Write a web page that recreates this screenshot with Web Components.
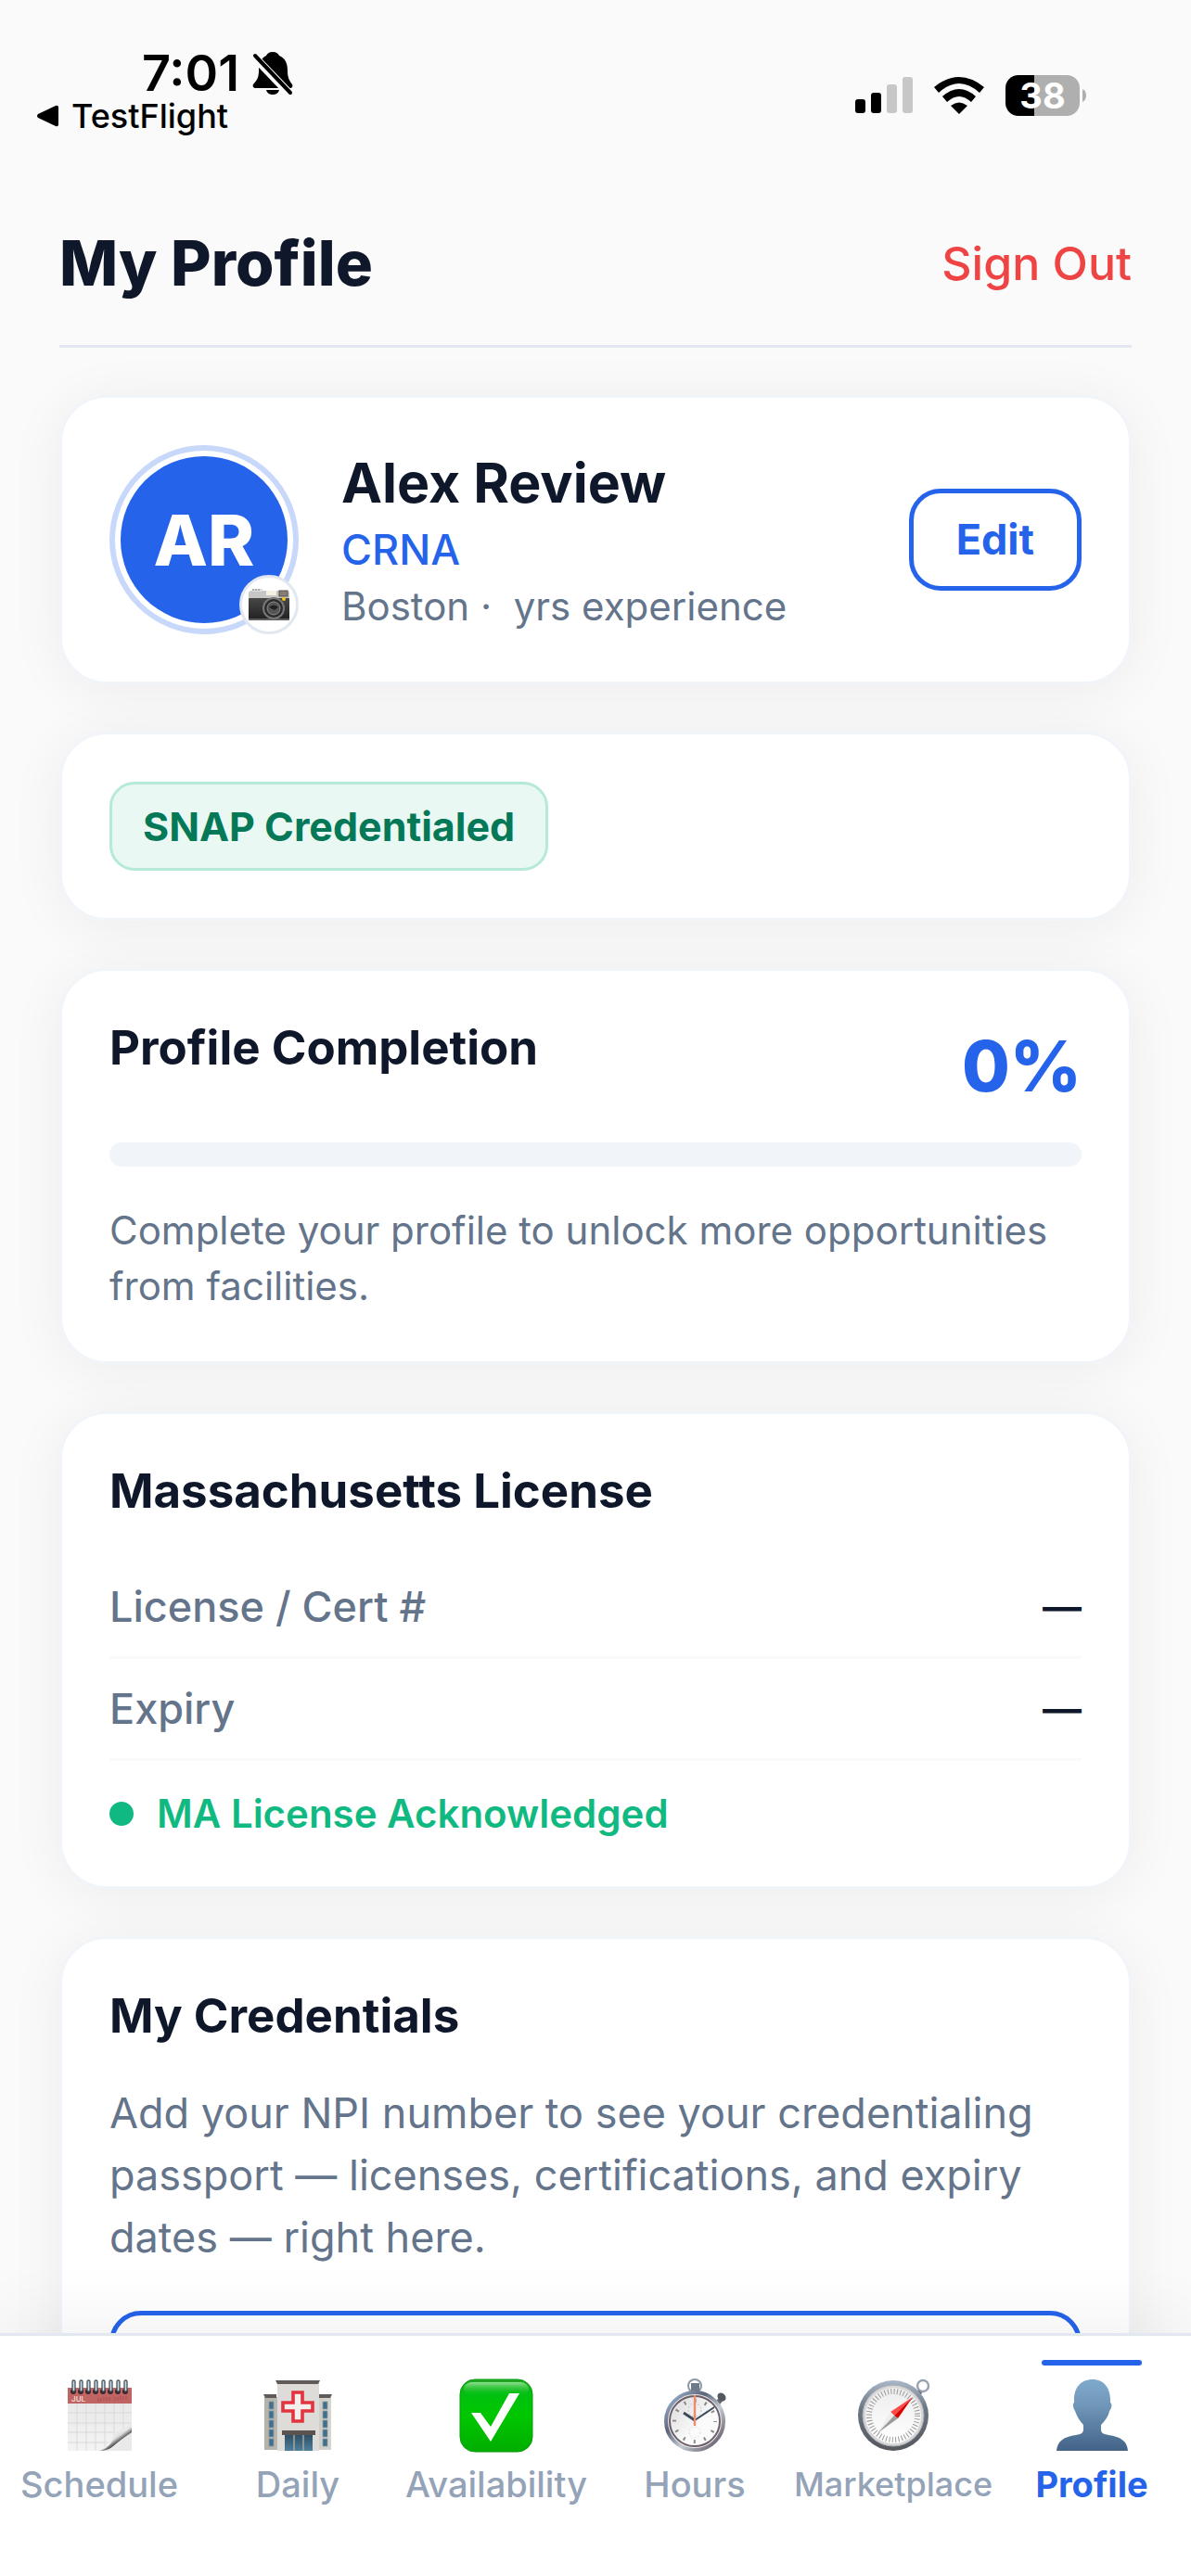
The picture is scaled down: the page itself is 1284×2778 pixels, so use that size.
<!DOCTYPE html>
<html lang="en">
<head>
<meta charset="UTF-8">
<meta name="viewport" content="width=device-width, initial-scale=1">
<title>My Profile</title>
<style>
    :root {
        --blue: #2563eb;
        --ink: #0f172a;
        --muted: #64748b;
        --line: #e2e8f0;
        --soft: #f1f5f9;
    }

    body {
        margin: 0;
        background: #fafafa;
        color: var(--ink);
        font-family: Inter, "Liberation Sans", sans-serif;
    }
</style>
</head>
<body>
<profile-screen></profile-screen>

<script>
const reset = `
    * { margin: 0; padding: 0; box-sizing: border-box; }
    :host { display: block; }
    button { font: inherit; background: none; border: none; cursor: pointer; }
    svg { display: block; }
`;

class BaseElement extends HTMLElement {
    connectedCallback() {
        if (this.shadowRoot) return;
        this.attachShadow({ mode: 'open' });
        this.shadowRoot.innerHTML = `<style>${reset}</style>${this.template()}`;
    }
}

class StatusBar extends BaseElement {
    template() {
        return `
            <style>
                .bar {
                    display: flex;
                    justify-content: space-between;
                    align-items: flex-end;
                    padding: 49px 113px 53px 40px;
                    color: #000;
                }
                .time {
                    display: flex;
                    align-items: center;
                    gap: 14px;
                    padding-left: 113px;
                    font-size: 54px;
                    line-height: 60px;
                    font-weight: 600;
                }
                .back {
                    display: flex;
                    align-items: center;
                    gap: 14px;
                    font-size: 36px;
                    line-height: 32px;
                    font-weight: 500;
                    color: inherit;
                }
                .signals {
                    display: flex;
                    align-items: center;
                    gap: 23px;
                    padding-bottom: 16px;
                }
                .battery { display: flex; align-items: center; gap: 3px; }
                .cell {
                    width: 80px;
                    border-radius: 14px;
                    background: linear-gradient(90deg, #000 39%, #afafaf 39%);
                    color: #fff;
                    font-size: 38px;
                    line-height: 44px;
                    font-weight: 700;
                    text-align: center;
                }
            </style>
            <div class="bar">
                <div>
                    <div class="time">
                        <span>7:01</span>
                        <svg width="44" height="48" viewBox="0 0 44 48" aria-hidden="true">
                            <path d="M22 1c4 0 6 2 7 4 7 3 9 9 9 16 0 8 2 11 5 15 1 2 0 4-2 4H4c-3 0-4-2-3-4 4-5 6-7 6-15C7 13 9 8 15 5c1-2 3-4 7-4z"/>
                            <path d="M15 42h14c-1 4-4 5-7 5s-6-1-7-5z"/>
                            <path d="M0 4l42 44" stroke="#fafafa" stroke-width="9"/>
                            <path d="M3 5l38 40" stroke="#000" stroke-width="4" stroke-linecap="round"/>
                        </svg>
                    </div>
                    <button class="back">
                        <svg width="23" height="24" viewBox="0 0 23 24" aria-hidden="true"><path d="M1 10L20 1q3-1 3 2v18q0 3-3 2L1 14q-2-2 0-4z"/></svg>
                        TestFlight
                    </button>
                </div>
                <div class="signals">
                    <svg width="62" height="40" viewBox="0 0 62 40" aria-label="Signal">
                        <rect y="24" width="11" height="15" rx="3"/>
                        <rect x="17" y="17" width="11" height="22" rx="3"/>
                        <rect x="34" y="8" width="11" height="31" rx="3" fill="#c7c7c7"/>
                        <rect x="51" width="11" height="39" rx="3" fill="#c7c7c7"/>
                    </svg>
                    <svg width="54" height="40" viewBox="0 0 54 40" aria-label="Wi-Fi">
                        <path d="M0 11Q27-11 54 11L49 17Q27-3 5 17Z"/>
                        <path d="M9 21Q27 5 45 21L40 27Q27 15 14 27Z"/>
                        <path d="M18 31Q27 24 36 31L27 40Z"/>
                    </svg>
                    <div class="battery">
                        <div class="cell">38</div>
                        <svg width="4" height="14" viewBox="0 0 4 14" aria-hidden="true"><path d="M0 0q4 2 4 7t-4 7z" fill="#afafaf"/></svg>
                    </div>
                </div>
            </div>
        `;
    }
}

class PageHeader extends BaseElement {
    template() {
        return `
            <style>
                header {
                    display: flex;
                    justify-content: space-between;
                    align-items: center;
                    margin: 0 64px;
                    padding: 48px 0 46px;
                    border-bottom: 3px solid var(--line);
                }
                h1 { font-size: 67px; line-height: 84px; font-weight: 800; }
                button { color: #ef4444; font-size: 50px; line-height: 60px; font-weight: 500; }
            </style>
            <header>
                <h1><slot></slot></h1>
                <button>Sign Out</button>
            </header>
        `;
    }
}

class SurfaceCard extends BaseElement {
    template() {
        return `
            <style>
                section {
                    padding: 51px;
                    background: #fff;
                    border: 3px solid var(--soft);
                    border-radius: 51px;
                    box-shadow: 0 6px 60px rgba(0, 0, 0, 0.06);
                }
            </style>
            <section><slot></slot></section>
        `;
    }
}

class CardTitle extends BaseElement {
    template() {
        return `
            <style>
                h2 { font-size: 51px; line-height: 64px; font-weight: 700; }
            </style>
            <h2><slot></slot></h2>
        `;
    }
}

class UserAvatar extends BaseElement {
    template() {
        return `
            <style>
                :host { position: relative; flex: none; }
                .ring {
                    padding: 6px;
                    border: 6px solid #c8d8fb;
                    border-radius: 50%;
                }
                .initials {
                    width: 180px;
                    border-radius: 50%;
                    background: var(--blue);
                    color: #fff;
                    font-size: 76px;
                    line-height: 180px;
                    font-weight: 800;
                    text-align: center;
                }
                button {
                    position: absolute;
                    right: 0;
                    bottom: 0;
                    display: grid;
                    place-items: center;
                    width: 64px;
                    height: 64px;
                    background: #fff;
                    border: 3px solid var(--line);
                    border-radius: 50%;
                }
            </style>
            <div class="ring"><div class="initials"><slot></slot></div></div>
            <button aria-label="Change photo">
                <svg width="46" height="36" viewBox="0 0 46 36">
                    <defs>
                        <linearGradient id="body" x2="0" y2="1"><stop stop-color="#484848"/><stop offset="1" stop-color="#202020"/></linearGradient>
                    </defs>
                    <path d="M1 6q0-3 3-3h1V1h11v2h27q2 0 2 3v6H1z" fill="#c6c6c4"/>
                    <path d="M5 1h11v3H5z" fill="#dedede"/>
                    <path d="M6 1v2M9 1v2M12 1v2" stroke="#777"/>
                    <rect x="20" y="3" width="11" height="5" fill="#f4f0e2"/>
                    <rect x="34" y="3" width="9" height="6" fill="#8a7d74" stroke="#555"/>
                    <rect x="1" y="11" width="44" height="24" rx="1" fill="url(#body)"/>
                    <path d="M1 34h44" stroke="#999"/>
                    <circle cx="28" cy="22" r="12" fill="#777"/>
                    <circle cx="28" cy="22" r="10" fill="#2b2b2b"/>
                    <circle cx="28" cy="22" r="7" fill="#555" stroke="#8c8c8c"/>
                    <path d="M23 21q5-5 10 0l-4 3z" fill="#222"/>
                    <circle cx="39" cy="12" r="2" fill="#f5c518"/>
                </svg>
            </button>
        `;
    }
}

class ProfileSummary extends BaseElement {
    template() {
        return `
            <style>
                .summary { display: flex; align-items: center; gap: 46px; }
                .info { flex: 1; }
                .name { font-size: 59px; line-height: 76px; font-weight: 700; }
                .role { font-size: 45px; line-height: 68px; font-weight: 500; color: var(--blue); }
                .meta { font-size: 42px; line-height: 54px; color: var(--muted); white-space: pre; }
            </style>
            <div class="summary">
                <user-avatar>AR</user-avatar>
                <div class="info">
                    <h2 class="name">Alex Review</h2>
                    <p class="role">CRNA</p>
                    <p class="meta">Boston ·  yrs experience</p>
                </div>
                <outline-button>Edit</outline-button>
            </div>
        `;
    }
}

class OutlineButton extends BaseElement {
    template() {
        return `
            <style>
                button {
                    width: 100%;
                    min-height: 110px;
                    padding: 0 46px;
                    border: 5px solid var(--blue);
                    border-radius: 34px;
                    color: var(--blue);
                    font-size: 45px;
                    line-height: 54px;
                    font-weight: 700;
                }
            </style>
            <button aria-label="${this.getAttribute('label') || this.textContent}"><slot></slot></button>
        `;
    }
}

class StatusChip extends BaseElement {
    template() {
        return `
            <style>
                .chip {
                    display: inline-block;
                    vertical-align: top;
                    padding: 18px 33px;
                    border: 3px solid #b5ead7;
                    border-radius: 27px;
                    background: #eaf8f4;
                    color: #047857;
                    font-size: 43px;
                    line-height: 54px;
                    font-weight: 700;
                }
            </style>
            <span class="chip"><slot></slot></span>
        `;
    }
}

class CompletionMeter extends BaseElement {
    template() {
        const value = this.getAttribute('value');
        return `
            <style>
                .top { display: flex; justify-content: space-between; }
                .value { font-size: 75px; line-height: 104px; font-weight: 800; color: var(--blue); }
                .track {
                    height: 26px;
                    margin: 30px 0 39px;
                    border-radius: 13px;
                    background: var(--soft);
                    overflow: hidden;
                }
                .fill { width: ${value}%; height: 100%; background: var(--blue); }
                p { font-size: 42px; line-height: 60px; color: var(--muted); }
            </style>
            <div class="top">
                <card-title>Profile Completion</card-title>
                <div class="value">${value}%</div>
            </div>
            <div class="track" role="progressbar" aria-label="Profile Completion" aria-valuenow="${value}">
                <div class="fill"></div>
            </div>
            <p><slot></slot></p>
        `;
    }
}

class DetailRow extends BaseElement {
    template() {
        return `
            <style>
                dl {
                    display: flex;
                    justify-content: space-between;
                    align-items: center;
                    padding: 24px 0 23px;
                    border-bottom: 3px solid #f8fafc;
                    font-size: 45px;
                    line-height: 60px;
                    font-weight: 500;
                }
                dt { color: var(--muted); }
                dd { font-size: 42px; font-weight: 600; }
            </style>
            <dl><dt>${this.getAttribute('label')}</dt><dd><slot></slot></dd></dl>
        `;
    }
}

class LicenseDetails extends BaseElement {
    template() {
        return `
            <style>
                card-title { margin-bottom: 39px; }
                .state {
                    display: flex;
                    align-items: center;
                    gap: 25px;
                    padding-top: 30px;
                    color: #10b981;
                    font-size: 42px;
                    line-height: 54px;
                    font-weight: 600;
                }
                .dot { width: 26px; height: 26px; border-radius: 50%; background: #10b981; }
            </style>
            <card-title>Massachusetts License</card-title>
            <detail-row label="License / Cert #">—</detail-row>
            <detail-row label="Expiry">—</detail-row>
            <p class="state"><span class="dot"></span>MA License Acknowledged</p>
        `;
    }
}

class CredentialPrompt extends BaseElement {
    template() {
        return `
            <style>
                p {
                    margin: 39px 0 46px;
                    font-size: 45px;
                    line-height: 67px;
                    color: var(--muted);
                }
            </style>
            <card-title>My Credentials</card-title>
            <p><slot></slot></p>
            <outline-button label="Add NPI number"></outline-button>
        `;
    }
}

const tabIcons = {
    calendar: `
        <defs>
            <linearGradient id="page" x2="0" y2="1"><stop stop-color="#e8e8e8"/><stop offset="1" stop-color="#f4f4f4"/></linearGradient>
            <linearGradient id="curl" x1=".3" y1=".3" x2=".75" y2=".8"><stop stop-color="#fff"/><stop offset=".45" stop-color="#ddd"/><stop offset=".7" stop-color="#4d4d4d"/><stop offset="1" stop-color="#ddd"/></linearGradient>
        </defs>
        <path d="M6 26h69v52H6z" fill="url(#page)"/>
        <path d="M16 27v51M26 27v51M36 27v51M46 27v47M56 27v35M66 27v28M6 37h69M6 48h69M6 58h50M6 69h44" stroke="#d9d9d9" fill="none"/>
        <path d="M75 46q-2 7-12 9-7 2-9 10-3 8-14 13h35z" fill="#e9e9e9"/>
        <path d="M75 50q-3 6-13 8-6 5-9 11-4 7-14 9 11 0 16-5 8-7 20-15z" fill="url(#curl)"/>
        <path d="M6 10h69v17H6z" fill="#c06464"/>
        <path d="M39 21v4M42 21v4M45 20v4M48 20v4M51 20v4M57 20v4M60 20v4M63 19v4M66 19v4M69 19v4" stroke="#a94f52"/>
        <text x="10" y="25" font-size="8" font-weight="600" fill="#f3dada">JUL</text>
        <g fill="#3a2a2d"><circle cx="12" cy="14" r="3"/><circle cx="20" cy="14" r="3"/><circle cx="28" cy="14" r="3"/><circle cx="36" cy="14" r="3"/><circle cx="44" cy="14" r="3"/><circle cx="52" cy="14" r="3"/><circle cx="60" cy="14" r="3"/><circle cx="68" cy="14" r="3"/></g>
        <g fill="#c9dbe3" stroke="#46525b" stroke-width="1.3"><rect x="11" y="2" width="3" height="12" rx="1.5"/><rect x="19" y="2" width="3" height="12" rx="1.5"/><rect x="27" y="2" width="3" height="12" rx="1.5"/><rect x="35" y="2" width="3" height="12" rx="1.5"/><rect x="43" y="2" width="3" height="12" rx="1.5"/><rect x="51" y="2" width="3" height="12" rx="1.5"/><rect x="59" y="2" width="3" height="12" rx="1.5"/><rect x="67" y="2" width="3" height="12" rx="1.5"/></g>
    `,
    hospital: `
        <defs>
            <linearGradient id="wall" x2="1" y2="0"><stop stop-color="#b3b1aa"/><stop offset="1" stop-color="#d5d4cf"/></linearGradient>
            <linearGradient id="glass" x2="0" y2="1"><stop stop-color="#2d4d63"/><stop offset="1" stop-color="#4d7f9c"/></linearGradient>
        </defs>
        <path d="M4 20h14v57H4zM63 20h13v57H63z" fill="url(#wall)"/>
        <path d="M3 17h14v4H5zM63 17h14l-2 4H63z" fill="#605a59"/>
        <path d="M18 5h45v73H18z" fill="#dddcd8"/>
        <path d="M16 2h48l-2 4H18z" fill="#605a59"/>
        <path d="M35 15h10v11h11v9H45v11H35V35H24v-9h11z" fill="#f2efec" stroke="#e2343f" stroke-width="3.6"/>
        <g fill="#3f6f8c" stroke="#8d9ba0" stroke-width=".8"><rect x="9" y="25" width="5" height="8"/><rect x="9" y="35" width="5" height="8"/><rect x="9" y="45" width="5" height="8"/><rect x="9" y="55" width="5" height="8"/><rect x="9" y="65" width="5" height="8"/><rect x="67" y="25" width="5" height="8"/><rect x="67" y="35" width="5" height="8"/><rect x="67" y="45" width="5" height="8"/><rect x="67" y="55" width="5" height="8"/><rect x="67" y="65" width="5" height="8"/></g>
        <path d="M26 60h30v18H26z" fill="url(#glass)"/>
        <path d="M36 61v17M46 61v17" stroke="#aaa49b" stroke-width="1.5"/>
        <path d="M23 56h36v5H23z" fill="#5b5350"/>
    `,
    check: `
        <defs>
            <linearGradient id="green" x2="0" y2="1"><stop stop-color="#26a426"/><stop offset=".2" stop-color="#00c010"/><stop offset=".5" stop-color="#00c700"/><stop offset="1" stop-color="#00ad00"/></linearGradient>
            <linearGradient id="gloss" x2="0" y2="1"><stop stop-color="#8fe08f"/><stop offset="1" stop-color="#00c010" stop-opacity="0"/></linearGradient>
        </defs>
        <rect x="1" y="1" width="78" height="78" rx="16" fill="url(#green)" stroke="#0a9a0a"/>
        <rect x="5" y="4" width="70" height="15" rx="9" fill="url(#gloss)"/>
        <path d="M13 37h10l11 15 20-36h11L34 68z" fill="#fff"/>
    `,
    stopwatch: `
        <defs>
            <linearGradient id="rim" x1="0" y1="0" x2="1" y2="1"><stop stop-color="#a9c0e0"/><stop offset=".35" stop-color="#5b6478"/><stop offset=".6" stop-color="#c5ccd5"/><stop offset="1" stop-color="#4a3f4c"/></linearGradient>
            <linearGradient id="dial" x2="1" y2="1"><stop stop-color="#d9d9d9"/><stop offset=".6" stop-color="#fbfbfb"/></linearGradient>
        </defs>
        <circle cx="40" cy="8" r="7" fill="none" stroke="#8d98a5" stroke-width="2"/>
        <path d="M36 5h9v11h-9z" fill="#6d7b88"/>
        <path d="M63 24l6-6 3 4-5 6z" fill="#65696f"/>
        <ellipse cx="69" cy="20" rx="4" ry="5" transform="rotate(-45 69 20)" fill="#525960"/>
        <circle cx="40" cy="46" r="31" fill="#e9eaec" stroke="url(#rim)" stroke-width="4"/>
        <circle cx="40" cy="46" r="27" fill="url(#dial)" stroke="#6c5e66" stroke-width="2"/>
        <circle cx="40" cy="46" r="22" fill="none" stroke="#8a8a8a" stroke-width="4" stroke-dasharray="2 9.52" stroke-dashoffset="1"/>
        <circle cx="40" cy="34" r="7" fill="none" stroke="#c4c4c4" stroke-dasharray="2 2"/>
        <circle cx="40" cy="58" r="6" fill="none" stroke="#ddd" stroke-dasharray="2 2"/>
        <path d="M40 45l21-14" stroke="#3b4a5a" stroke-width="2"/>
        <path d="M40 45l-12-8" stroke="#3b4a5a" stroke-width="3"/>
        <path d="M40 18v33" stroke="#f08a6c" stroke-width="2.4"/>
    `,
    compass: `
        <defs>
            <linearGradient id="case" x2="0" y2="1"><stop stop-color="#a9b8c9"/><stop offset=".4" stop-color="#6b7684"/><stop offset="1" stop-color="#55585d"/></linearGradient>
            <linearGradient id="face" x2="0" y2="1"><stop stop-color="#ededed"/><stop offset="1" stop-color="#fff"/></linearGradient>
        </defs>
        <circle cx="72" cy="8" r="6" fill="none" stroke="#98a2ae" stroke-width="2.4"/>
        <path d="M66 14l4 3" stroke="#66707c" stroke-width="4"/>
        <circle cx="40" cy="40" r="38" fill="url(#case)"/>
        <circle cx="40" cy="40" r="33" fill="#d6d6d6" stroke="#a9adb2"/>
        <circle cx="40" cy="40" r="30" fill="url(#face)"/>
        <circle cx="40" cy="40" r="26" fill="none" stroke="#9a9a9a" stroke-width="6" stroke-dasharray="1 2.4"/>
        <path d="M61 20L37 36l4 4z" fill="#ff4a4a"/>
        <path d="M61 20L45 43l-4-3z" fill="#d90000"/>
        <path d="M23 59l14-23 4 4z" fill="#eee"/>
        <path d="M23 59l22-16-4-3z" fill="#9c9c9c"/>
    `,
    person: `
        <defs>
            <linearGradient id="bust" x2="0" y2="1"><stop stop-color="#7fa9cb"/><stop offset=".3" stop-color="#749bbd"/><stop offset="1" stop-color="#436387"/></linearGradient>
        </defs>
        <path d="M41 1C28 1 21 10 21 23v3c-2 1-1 6 1 9 2 6 5 11 9 15v5c0 4-3 5-8 6C10 63 3 67 2 78h77C78 67 71 63 58 61c-5-1-8-2-8-6v-5c4-4 8-9 9-15 3-3 3-8 1-9v-3C60 10 53 1 41 1z" fill="url(#bust)"/>
    `
};

class TabItem extends BaseElement {
    template() {
        return `
            <style>
                a {
                    display: flex;
                    flex-direction: column;
                    align-items: center;
                    padding: 26px 0 77px;
                    color: #94a3b8;
                    font-size: 38px;
                    line-height: 44px;
                    font-weight: 500;
                    text-decoration: none;
                }
                .mark { width: 108px; height: 6px; margin-bottom: 14px; border-radius: 3px; }
                svg { margin-bottom: 12px; }
                :host([compact]) a { font-size: 36px; }
                :host([active]) a { color: var(--blue); font-weight: 700; }
                :host([active]) .mark { background: var(--blue); }
            </style>
            <a href="#">
                <span class="mark"></span>
                <svg width="80" height="80" viewBox="0 0 80 80" aria-hidden="true">${tabIcons[this.getAttribute('icon')]}</svg>
                <span><slot></slot></span>
            </a>
        `;
    }
}

class TabBar extends BaseElement {
    template() {
        return `
            <style>
                nav {
                    display: grid;
                    grid-template-columns: repeat(6, minmax(0, 1fr));
                    background: #fff;
                    border-top: 3px solid var(--line);
                    box-shadow: 0 -12px 72px rgba(0, 0, 0, 0.06);
                }
            </style>
            <nav>
                <tab-item icon="calendar">Schedule</tab-item>
                <tab-item icon="hospital">Daily</tab-item>
                <tab-item icon="check">Availability</tab-item>
                <tab-item icon="stopwatch">Hours</tab-item>
                <tab-item icon="compass" compact>Marketplace</tab-item>
                <tab-item icon="person" active>Profile</tab-item>
            </nav>
        `;
    }
}

class ProfileScreen extends BaseElement {
    template() {
        return `
            <style>
                :host {
                    display: flex;
                    flex-direction: column;
                    height: 100vh;
                }
                main {
                    flex: 1;
                    min-height: 0;
                    overflow-y: auto;
                    scrollbar-width: none;
                }
                .cards {
                    display: flex;
                    flex-direction: column;
                    gap: 51px;
                    padding: 51px 64px;
                }
                tab-bar { position: relative; z-index: 1; }
            </style>
            <status-bar></status-bar>
            <page-header>My Profile</page-header>
            <main>
                <div class="cards">
                    <surface-card><profile-summary></profile-summary></surface-card>
                    <surface-card><status-chip>SNAP Credentialed</status-chip></surface-card>
                    <surface-card>
                        <completion-meter value="0">Complete your profile to unlock more opportunities from facilities.</completion-meter>
                    </surface-card>
                    <surface-card><license-details></license-details></surface-card>
                    <surface-card>
                        <credential-prompt>Add your NPI number to see your credentialing passport — licenses, certifications, and expiry dates — right here.</credential-prompt>
                    </surface-card>
                </div>
            </main>
            <tab-bar></tab-bar>
        `;
    }
}

customElements.define('status-bar', StatusBar);
customElements.define('page-header', PageHeader);
customElements.define('surface-card', SurfaceCard);
customElements.define('card-title', CardTitle);
customElements.define('user-avatar', UserAvatar);
customElements.define('outline-button', OutlineButton);
customElements.define('profile-summary', ProfileSummary);
customElements.define('status-chip', StatusChip);
customElements.define('completion-meter', CompletionMeter);
customElements.define('detail-row', DetailRow);
customElements.define('license-details', LicenseDetails);
customElements.define('credential-prompt', CredentialPrompt);
customElements.define('tab-item', TabItem);
customElements.define('tab-bar', TabBar);
customElements.define('profile-screen', ProfileScreen);
</script>
</body>
</html>
